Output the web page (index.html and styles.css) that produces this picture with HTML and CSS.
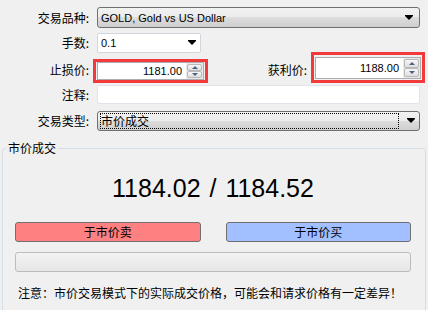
FILE: index.html
```html
<!DOCTYPE html>
<html lang="zh">

<head>
  <meta charset="UTF-8" />
  <title>交易</title>
  <link rel="stylesheet" href="styles.css">
</head>

<body>
  <div class="row">
    <label class="lbl">交易品种:</label>
    <div class="combo combo-btn">
      <span class="combo-text">GOLD, Gold vs US Dollar</span>
      <i class="arrow"></i>
    </div>
  </div>

  <div class="row">
    <label class="lbl">手数:</label>
    <div class="combo combo-edit">
      <span class="combo-text">0.1</span>
      <i class="arrow"></i>
    </div>
  </div>

  <div class="row row-prices">
    <label class="lbl lbl-low">止损价:</label>
    <div class="mark mark-sl">
      <div class="spin">
        <span class="spin-val">1181.00</span>
        <div class="spin-btns"><b class="up"></b><b class="down"></b></div>
      </div>
    </div>
    <label class="lbl-tp lbl-low">获利价:</label>
    <div class="mark mark-tp">
      <div class="spin">
        <span class="spin-val">1188.00</span>
        <div class="spin-btns"><b class="up"></b><b class="down"></b></div>
      </div>
    </div>
  </div>

  <div class="row row-comment">
    <label class="lbl">注释:</label>
    <div class="edit"></div>
  </div>

  <div class="row row-type">
    <label class="lbl">交易类型:</label>
    <div class="combo combo-btn combo-type">
      <span class="focus">市价成交</span>
      <i class="arrow"></i>
    </div>
  </div>

  <fieldset class="group">
    <legend>市价成交</legend>
    <div class="price">1184.02 / 1184.52</div>
    <div class="actions">
      <button class="btn btn-sell">于市价卖</button>
      <button class="btn btn-buy">于市价买</button>
    </div>
    <div class="progress"></div>
    <p class="note">注意：市价交易模式下的实际成交价格，可能会和请求价格有一定差异！</p>
  </fieldset>
</body>

</html>
```

FILE: styles.css
```css
/* Global */
* {
  box-sizing: border-box;
  margin: 0;
  padding: 0;
}

html,
body {
  height: 100%;
  overflow: hidden;
}

body {
  background: #f0f0f0;
  color: #000;
  font-family: "Liberation Sans", "Noto Sans CJK SC", sans-serif;
  font-size: 12px;
  padding-top: 7px;
}

/* Form rows */
.row {
  display: flex;
  align-items: center;
  gap: 8px;
  margin: 5px 8px 0 0;
}

.row:first-child {
  margin-top: 0;
}

.row-prices {
  margin-top: -1px;
}

.row-comment {
  margin-top: 2px;
}

.row-type {
  margin-top: 7px;
}

.lbl,
.lbl-tp,
.focus,
legend,
.btn,
.note {
  font-family: "Noto Sans CJK SC", sans-serif;
  font-size: 12px;
  line-height: 14px;
}

.lbl {
  width: 89px;
  flex: none;
  text-align: right;
}

.lbl-tp {
  margin-left: auto;
}

.lbl-low {
  padding-top: 5px;
}

/* Combo boxes */
.combo {
  display: flex;
  align-items: center;
  height: 21px;
  border: 1px solid #707070;
  border-radius: 3px;
  padding: 0 6px 0 3px;
  font-size: 11px;
}

.combo-text {
  flex: 1;
}

.combo-btn {
  flex: 1;
  background: linear-gradient(#f2f2f2, #ebebeb 50%, #dddddd 50%, #cfcfcf);
}

.combo-edit {
  flex: none;
  width: 104px;
  height: 20px;
  padding-right: 4px;
  background: #fff;
  border-color: #d3d6dc;
  border-radius: 2px;
}

.combo-type {
  height: 20px;
  padding: 0 4px 0 2px;
}

.focus {
  flex: 1;
  height: 16px;
  margin-right: 8px;
  border: 1px dotted #000;
  line-height: 14px;
}

.arrow {
  width: 0;
  height: 0;
  border-left: 4px solid transparent;
  border-right: 4px solid transparent;
  border-top: 4px solid #000;
  box-shadow: 0 -1px 0 #000;
}

/* Spinners with red highlight */
.mark {
  flex: none;
  margin-left: -4px;
  border: 3px solid #f33a3a;
}

.mark-sl {
  align-self: flex-end;
  padding: 0 1px;
}

.mark-tp {
  align-self: flex-start;
  padding: 2px 1px 1px;
  margin-right: -5px;
}

.spin {
  display: flex;
  background: #fff;
  border: 1px solid #abadb3;
}

.mark-sl .spin {
  width: 107px;
  height: 18px;
}

.mark-tp .spin {
  width: 106px;
  height: 22px;
}

.spin-val {
  flex: 1;
  align-self: center;
  text-align: right;
  padding-right: 4px;
  font-size: 11px;
}

.spin-btns {
  display: flex;
  flex-direction: column;
  width: 17px;
  padding: 1px;
  background: #e9e9e9;
}

.spin-btns b {
  flex: 1;
  display: flex;
  align-items: center;
  justify-content: center;
  border: 1px solid #b9b9b9;
  border-radius: 2px;
  background: linear-gradient(#f7f7f7, #dedede);
}

.spin-btns b::after {
  content: "";
  border-left: 3px solid transparent;
  border-right: 3px solid transparent;
  border-bottom: 3px solid #4d6185;
}

.spin-btns .down::after {
  border-bottom: 0;
  border-top: 3px solid #4d6185;
}

.edit {
  flex: 1;
  height: 19px;
  background: #fff;
  border: 1px solid #e2e3ea;
  border-radius: 2px;
}

/* Group box */
.group {
  margin: 10px 2px 0;
  padding: 0 14px 20px 12px;
  border: 1px solid #d5dfe5;
  border-radius: 3px;
}

.group legend {
  margin-left: -9px;
  padding: 0 2px;
}

.price {
  margin-top: 18px;
  font-size: 25px;
  line-height: 30px;
  text-align: center;
  word-spacing: 2px;
}

.actions {
  display: grid;
  grid-template-columns: 1fr 1fr;
  gap: 25px;
  margin-top: 19px;
}

.btn {
  height: 20px;
  border: 1px solid #707070;
  border-radius: 3px;
  color: #000;
  line-height: 18px;
}

.btn-sell {
  background: #ff8080;
}

.btn-buy {
  background: #a2c0ff;
}

.progress {
  height: 20px;
  margin-top: 10px;
  border: 1px solid #bcbcbc;
  border-radius: 3px;
  background: linear-gradient(#f3f3f3, #e6e6e6);
}

.note {
  margin-top: 13px;
  padding-left: 3px;
  line-height: 16px;
}
```
